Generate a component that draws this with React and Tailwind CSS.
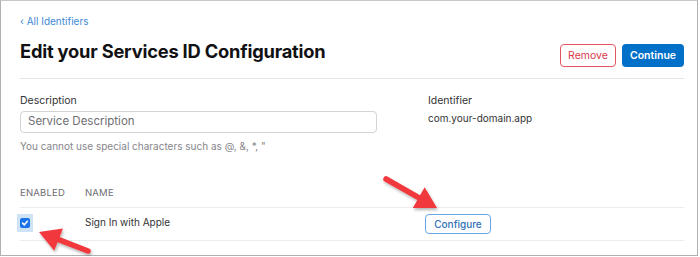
import React from 'react';

const Arrow = ({ className, x1, y1, x2, y2 }) => {
  const dx = x2 - x1;
  const dy = y2 - y1;
  const len = Math.hypot(dx, dy);
  const ux = dx / len;
  const uy = dy / len;
  const headLen = 21;
  const headW = 12;
  const bx = x2 - ux * headLen;
  const by = y2 - uy * headLen;
  const px = -uy;
  const py = ux;
  return (
    <svg className={className} width="700" height="257" viewBox="0 0 700 257">
      <defs>
        <filter id="sh" x="-20%" y="-20%" width="140%" height="140%">
          <feDropShadow dx="1" dy="2" stdDeviation="1.5" floodColor="#000" floodOpacity="0.3" />
        </filter>
      </defs>
      <g filter="url(#sh)">
        <line x1={x1} y1={y1} x2={bx + ux * 2} y2={by + uy * 2} stroke="#f0373c" strokeWidth="5.5" strokeLinecap="round" />
        <polygon
          points={`${x2},${y2} ${bx + px * headW},${by + py * headW} ${bx - px * headW},${by - py * headW}`}
          fill="#f0373c"
        />
      </g>
    </svg>
  );
};

export default function App() {
  return (
    <div className="relative w-[700px] h-[257px] bg-white overflow-hidden font-['Inter',sans-serif]">
      <div className="w-[698px] h-[256px] border border-[#b1b1b1] border-t-[#c8c8c8]">
        <div className="pl-[19px] pr-[13px] pt-[13px]">
          <a className="block text-[10px] leading-[14px] text-[#3d89d6]">‹ All Identifiers</a>

          <div className="flex justify-between mt-[11px] pb-[11px] border-b border-[#e5e5e5]">
            <h1 className="text-[18.3px] leading-[24px] font-bold text-[#111113] tracking-[-0.2px]">
              Edit your Services ID Configuration
            </h1>
            <div className="flex gap-[6px] mt-[5px]">
              <button className="w-[56px] h-[23px] rounded-[4px] border border-[#e55462] text-[#d9394a] text-[10.5px] bg-white">
                Remove
              </button>
              <button className="w-[62px] h-[23px] rounded-[4px] bg-[#0070c9] text-white text-[10.5px] font-semibold">
                Continue
              </button>
            </div>
          </div>

          <div className="flex mt-[15px]">
            <div className="w-[357px]">
              <div className="text-[10.5px] leading-[14px] text-[#333336]">Description</div>
              <div className="mt-[3px] h-[22px] border border-[#d2d2d7] rounded-[4px] flex items-center px-[7px] text-[11.5px] text-[#6e6e73]">
                Service Description
              </div>
              <div className="mt-[6px] text-[10px] leading-[14px] text-[#86868b]">
                You cannot use special characters such as @, &amp;, *, "
              </div>
            </div>
            <div className="ml-[51px]">
              <div className="text-[10.5px] leading-[14px] text-[#333336]">Identifier</div>
              <div className="mt-[3px] text-[10px] leading-[14px] text-[#333336]">com.your-domain.app</div>
            </div>
          </div>

          <div className="mt-[33px] flex leading-[14px] pb-[7px] border-b border-[#ececec] text-[9.5px] text-[#6e6e73] tracking-[0.2px]">
            <div className="w-[65px]">ENABLED</div>
            <div>NAME</div>
          </div>
          <div className="flex items-center h-[33px] border-b border-[#ececec]">
            <div className="w-[65px]">
              <div className="w-[16px] h-[18px] -ml-[3px] -mt-[3px] bg-[#cfe3f7] flex items-center justify-center">
                <div className="w-[10px] h-[10px] rounded-[2px] bg-[#1a73e8] flex items-center justify-center">
                  <svg width="8" height="8" viewBox="0 0 10 10">
                    <path d="M2 5.2 L4.2 7.3 L8 2.8" fill="none" stroke="#fff" strokeWidth="2" strokeLinecap="round" strokeLinejoin="round" />
                  </svg>
                </div>
              </div>
            </div>
            <div className="w-[340px] pb-[3px] text-[10px] text-[#333336]">Sign In with Apple</div>
            <button className="w-[66px] h-[20px] rounded-[4px] border border-[#6aa6e3] text-[#2f72b8] text-[10px] font-medium">
              Configure
            </button>
          </div>
        </div>
      </div>

      <Arrow className="absolute left-0 top-0 pointer-events-none" x1={386} y1={179} x2={437} y2={208} />
      <Arrow className="absolute left-0 top-0 pointer-events-none" x1={88} y1={251} x2={39} y2={232} />
    </div>
  );
}
